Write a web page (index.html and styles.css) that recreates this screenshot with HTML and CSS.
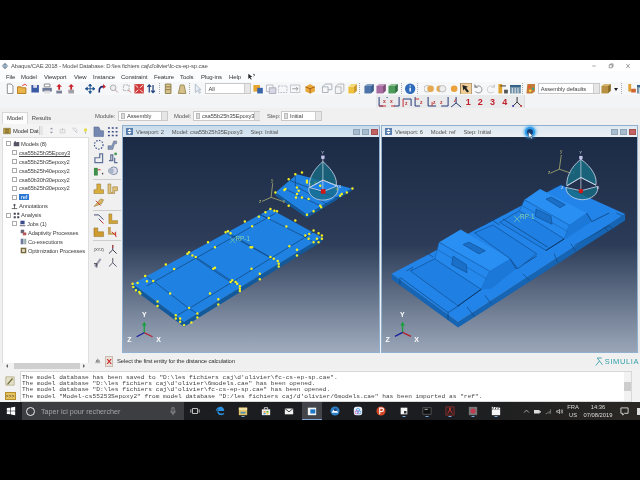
FILE: index.html
```html
<!DOCTYPE html>
<html lang="fr">
<head>
<meta charset="utf-8">
<title>Abaqus/CAE</title>
<link rel="stylesheet" href="styles.css">
</head>
<body>
<div class="letterbox top"></div>
<div class="app">
  <div class="titlebar">
    <svg class="ic title-ic" viewBox="0 0 12 12"><path d="M6 1 11 6 6 11 1 6Z" fill="#7a93a8"/><path d="M1 6h10" stroke="#e6eef2"/></svg>
    <span class="title-text">Abaqus/CAE 2018 - Model Database: D:\les fichiers caj\d'olivier\fc-cs-ep-sp.cae</span>
    <div class="win-btns">
      <svg class="wb" viewBox="0 0 10 10"><path d="M2 5h6" stroke="#777"/></svg>
      <svg class="wb" viewBox="0 0 10 10"><path d="M2 3h5v5H2ZM4 3V1.500h4.500V6H7" fill="none" stroke="#666"/></svg>
      <svg class="wb" viewBox="0 0 10 10"><path d="M2 1.500l6 7M8 1.500l-6 7" stroke="#666"/></svg>
    </div>
  </div>
  <div class="menubar">
    <span class="m m-file">File</span><span class="m m-model">Model</span><span class="m m-vp">Viewport</span><span class="m m-view">View</span><span class="m m-inst">Instance</span><span class="m m-con">Constraint</span><span class="m m-fea">Feature</span><span class="m m-too">Tools</span><span class="m m-plu">Plug-ins</span><span class="m m-hlp">Help</span>
    <svg class="ic help-arrow" viewBox="0 0 12 12"><path d="M2 1v8l2-2 2 3 1-1-2-3h3Z" fill="#222"/><path d="M9 2h2v2l-1 1" stroke="#222" fill="none"/></svg>
  </div>
  <div class="toolbar tb1">
    <svg class="ic" viewBox="0 0 12 12"><path d="M3 1h4l2 2v8H3Z" fill="#fff" stroke="#8a8a8a"/></svg>
    <svg class="ic" viewBox="0 0 12 12"><path d="M1 4h4l1 1h4v6H1Z" fill="#eab54a" stroke="#b47a1d"/><path d="M6 3l3-2 2 2" fill="none" stroke="#d33"/></svg>
    <svg class="ic" viewBox="0 0 12 12"><path d="M2 2h8v8H2Z" fill="#3b5aa6"/><path d="M4 2h4v3H4Z" fill="#dde"/></svg>
    <svg class="ic" viewBox="0 0 12 12"><path d="M3 1h6v3H3Z" fill="#fff" stroke="#888"/><path d="M1 5h10v4H1Z" fill="#6f7a9a"/><path d="M3 8h6v3H3Z" fill="#ddd"/></svg>
    <svg class="ic" viewBox="0 0 12 12"><path d="M6 1 9 4H7v3H5V4H3Z" fill="#c9242c"/><path d="M3 8h6v3H3Z" fill="#7c7f95"/></svg>
    <svg class="ic" viewBox="0 0 12 12"><path d="M6 1 9 4H7v3H5V4H3Z" fill="#c9242c"/><path d="M3 7h6v4H3Z" fill="#a2a0a8"/></svg>
    <svg class="ic g1" viewBox="0 0 12 12"><path d="M6 1v10M1 6h10M6 1 4.500 3h3ZM6 11 4.500 9h3ZM1 6l2-1.500v3ZM11 6 9 4.500v3Z" stroke="#20558f" fill="#20558f"/></svg>
    <svg class="ic" viewBox="0 0 12 12"><path d="M3 10C2 5 5 3 8 4" fill="none" stroke="#1c2f70" stroke-width="1.800"/><path d="M7 1l3 3-3 2Z" fill="#c9242c"/></svg>
    <svg class="ic" viewBox="0 0 12 12"><circle cx="5" cy="5" r="3" fill="#eee" stroke="#aaa"/><path d="M7 7l3 3" stroke="#b99"/></svg>
    <svg class="ic" viewBox="0 0 12 12"><path d="M2 2h6v6H2Z" fill="none" stroke="#aaa" stroke-dasharray="2 1"/><path d="M7 7l3 3" stroke="#c77"/></svg>
    <svg class="ic" viewBox="0 0 12 12"><path d="M1 1h10v10H1Z" fill="#cf3a3a"/><path d="M2 2l3 3M10 2 7 5M2 10l3-3M10 10 7 7" stroke="#fff"/></svg>
    <svg class="ic" viewBox="0 0 12 12"><path d="M4 10V2M2 4l2-2 2 2M8 2v8M6 8l2 2 2-2" fill="none" stroke="#1f3f7c" stroke-width="1.300"/></svg>
    <i class="sep"></i>
    <svg class="ic" viewBox="0 0 12 12"><path d="M3 1h6v10H3Z" fill="#d8c48c" stroke="#8d7c4a"/><path d="M3 4h6M3 7h6" stroke="#8d7c4a"/></svg>
    <svg class="ic g3" viewBox="0 0 12 12"><path d="M4 2h4l2 9H2Z" fill="#d6c18c" stroke="#9c8a55"/></svg>
    <i class="sep"></i>
    <svg class="ic" viewBox="0 0 12 12"><path d="M3 1v9l2.500-2 2 3 1-1-2-3H9Z" fill="#e8eef5" stroke="#9aa7b5" stroke-width=".7"/></svg>
    <span class="combo all"><span>All</span><b class="arr"></b></span>
    <svg class="ic g5" viewBox="0 0 12 12"><path d="M1 2h7v7H1Z" fill="#e8a52b"/><path d="M5 5h6v6H5Z" fill="#3a64a8"/></svg>
    <svg class="ic" viewBox="0 0 12 12"><path d="M1 2h7v7H1Z" fill="none" stroke="#b9b9c2"/><path d="M4 5h7v6H4Z" fill="#d5d8e4" stroke="#aab"/></svg>
    <svg class="ic" viewBox="0 0 12 12"><path d="M1 3h9v7H1Z" fill="none" stroke="#b5bcc8" stroke-dasharray="2 1"/></svg>
    <svg class="ic" viewBox="0 0 12 12"><path d="M1 2h10v8H1Z" fill="none" stroke="#bcc2cc"/><path d="M3 6h6M7 4l2 2-2 2" fill="none" stroke="#999"/></svg>
    <svg class="ic g6" viewBox="0 0 12 12"><path d="M6 1 11 4v5L6 11 1 9V4Z" fill="#e8a93a"/><path d="M1 4l5 2 5-2M6 6v5" stroke="#a65c1f" fill="none"/></svg>
    <svg class="ic g6b" viewBox="0 0 12 12"><path d="M1 4h6v6H1ZM4 1h7v6H7M1 4l3-3" fill="none" stroke="#a7aeba"/></svg>
    <svg class="ic" viewBox="0 0 12 12"><path d="M2 4h6v7H2ZM2 4l3-3h6v7l-3 3" fill="#f4f4f4" stroke="#b0b4bb"/></svg>
    <svg class="ic" viewBox="0 0 12 12"><path d="M2 4h6v7H2Z" fill="#eec23f"/><path d="M2 4l3-3h6L8 4Z" fill="#f4da78"/><path d="M8 4l3-3v7l-3 3Z" fill="#c99726"/></svg>
    <i class="sep"></i>
    <svg class="ic g8" viewBox="0 0 12 12"><path d="M1 3h7v8H1Z" fill="#4d74a8"/><path d="M1 3l3-2h7L8 3Z" fill="#7fa0c4"/><path d="M8 3l3-2v7l-3 3Z" fill="#365c8c"/></svg>
    <svg class="ic" viewBox="0 0 12 12"><path d="M1 3h7v8H1Z" fill="#a86ca2"/><path d="M1 3l3-2h7L8 3Z" fill="#c49ac0"/><path d="M8 3l3-2v7l-3 3Z" fill="#7d4c79"/></svg>
    <svg class="ic" viewBox="0 0 12 12"><path d="M1 3h7v8H1Z" fill="#4b9a5a"/><path d="M1 3l3-2h7L8 3Z" fill="#8dc08f"/><path d="M8 3l3-2v7l-3 3Z" fill="#2f7040"/></svg>
    <i class="sep"></i>
    <svg class="ic" viewBox="0 0 12 12"><circle cx="6" cy="6" r="5.500" fill="#2f6cbc"/><path d="M6 5v4M6 2.500v1" stroke="#fff" stroke-width="1.500"/></svg>
    <i class="sep"></i>
    <svg class="ic g10" viewBox="0 0 12 12"><circle cx="4" cy="6" r="3.500" fill="none" stroke="#bbb"/><circle cx="7.500" cy="6" r="3.500" fill="#e3a850"/></svg>
    <svg class="ic" viewBox="0 0 12 12"><circle cx="4.500" cy="6" r="3.500" fill="#e3a850"/><circle cx="7.500" cy="6" r="3.500" fill="#eee" stroke="#bbb"/></svg>
    <svg class="ic" viewBox="0 0 12 12"><circle cx="6" cy="6" r="3.500" fill="#eba23c"/></svg>
    <svg class="ic" viewBox="0 0 12 12"><path d="M0 0h12v12H0Z" fill="#f0cf9a" stroke="#98814e"/><path d="M2 2l6 2-2 1 3 4-2 1-3-4-1 2Z" fill="#222"/></svg>
    <svg class="ic" viewBox="0 0 12 12"><path d="M4 4C6 2 10 3 10 7S5 11 3 9" fill="none" stroke="#8a8a8a"/><path d="M2 1v4h4Z" fill="#8a8a8a"/></svg>
    <svg class="ic" viewBox="0 0 12 12"><path d="M8 4C6 2 2 3 2 7s5 4 7 2" fill="none" stroke="#ccc"/><path d="M10 1v4H6Z" fill="#ccc"/></svg>
    <svg class="ic" viewBox="0 0 12 12"><path d="M1 1h4v10H1Z" fill="#dea32e"/><path d="M7 7h4v4H7Z" fill="#555"/><path d="M3 3h6" stroke="#333"/></svg>
    <svg class="ic" viewBox="0 0 12 12"><path d="M0 2h12v9H0Z" fill="#6f8fa6"/><path d="M0 2h12v2H0Z" fill="#2f5f88"/><path d="M3 5v6M6 5v6M9 5v6" stroke="#e8eef2"/></svg>
    <i class="sep"></i>
    <svg class="ic" viewBox="0 0 12 12"><path d="M2 1h8v8l-3 2H1Z" fill="#c27b39"/><circle cx="4" cy="4" r="1.300" fill="#e53"/><circle cx="8" cy="6" r="1.300" fill="#3a8"/><circle cx="5" cy="8" r="1.300" fill="#fd4"/></svg>
    <span class="combo defaults"><span>Assembly defaults</span><b class="arr"></b></span>
    <svg class="ic" viewBox="0 0 12 12"><path d="M1 3h7v8H1Z" fill="#b89242"/><path d="M1 3l3-2h7L8 3Z" fill="#d3b56f"/><path d="M8 3l3-2v7l-3 3Z" fill="#8c6d28"/></svg>
    <b class="drop"></b>
    <i class="sep"></i>
    <svg class="ic g14" viewBox="0 0 12 12"><path d="M3 1h3v8H3Z" fill="#dca032"/><path d="M6 6h5v4H6Z" fill="#cc6633"/></svg>
    <svg class="ic g15" viewBox="0 0 12 12"><path d="M0 2h12v9H0Z" fill="#6f8fa6"/><path d="M0 2h12v2H0Z" fill="#2f5f88"/><path d="M3 5v6M6 5v6M9 5v6" stroke="#e8eef2"/></svg>
  </div>
  <div class="toolbar tb2">
    <div class="views">
      <svg class="ic" viewBox="0 0 12 12"><path d="M2 1v9h4M10 1v1" fill="none" stroke="#273a79"/><path d="M2 10h7" stroke="#c33"/><text x="6" y="7" class="axis">x</text></svg>
      <svg class="ic" viewBox="0 0 12 12"><path d="M10 1v9H5" fill="none" stroke="#273a79"/><path d="M2 10h4" stroke="#c33"/><text x="1" y="7" class="axis">x</text></svg>
      <svg class="ic" viewBox="0 0 12 12"><path d="M2 3h8v7" fill="none" stroke="#273a79"/><path d="M2 3v8" stroke="#c33"/><text x="4" y="9" class="axis">z</text></svg>
      <svg class="ic" viewBox="0 0 12 12"><path d="M2 1v9h5" fill="none" stroke="#273a79"/><path d="M2 3h4" stroke="#c33"/><text x="7" y="8" class="axis">z</text></svg>
      <svg class="ic" viewBox="0 0 12 12"><path d="M2 1v9h8" fill="none" stroke="#273a79"/><path d="M6 10V6" stroke="#c33"/><text x="7" y="8" class="axis">z</text></svg>
      <svg class="ic" viewBox="0 0 12 12"><path d="M10 1v9H3" fill="none" stroke="#273a79"/><text x="2" y="8" class="axis">z</text></svg>
      <svg class="ic" viewBox="0 0 12 12"><path d="M6 7V1M6 7 1 11M6 7l5 4" stroke="#273a79" fill="none"/><path d="M6 3 4 6" stroke="#c33"/></svg>
      <span class="num">1</span><span class="num">2</span><span class="num">3</span><span class="num">4</span>
      <svg class="ic" viewBox="0 0 12 12"><path d="M6 6V1M6 6 2 10M6 6l4 4" stroke="#333" fill="none"/><circle cx="10" cy="10" r="1" fill="#c33"/><circle cx="2" cy="10" r="1" fill="#33a"/></svg>
    </div>
  </div>
  <div class="mainrow">
    <aside class="sidebar">
      <div class="tabs"><span class="tab on">Model</span><span class="tab">Results</span></div>
      <div class="sidetools">
        <svg class="ic" viewBox="0 0 12 12"><path d="M1 2h10v8H1Z" fill="#c9a848" stroke="#7a6727"/><path d="M3 4h6M3 6h6M3 8h6" stroke="#5a4f25"/></svg>
        <span class="sidecombo"><span>Model Dat</span><b class="arr"></b></span>
        <svg class="ic sm" viewBox="0 0 12 12"><path d="M6 1 9 4H3ZM6 11 3 8h6Z" fill="#99a"/></svg>
        <svg class="ic sm" viewBox="0 0 12 12"><path d="M2 4h8v6H2Z" fill="none" stroke="#bbb"/><path d="M6 8V2" stroke="#bbb"/></svg>
        <svg class="ic sm" viewBox="0 0 12 12"><path d="M2 2h5l3 3v5" fill="none" stroke="#bbb"/><path d="M4 4l5 5" stroke="#aac"/></svg>
        <svg class="ic sm" viewBox="0 0 12 12"><circle cx="6" cy="5" r="3" fill="#e3dc4a"/><path d="M5 9h2v2H5Z" fill="#999"/></svg>
      </div>
      <div class="tree">
        <div class="row l0"><i class="exp"></i><svg class="ti" viewBox="0 0 10 10"><path d="M1 9V4l2-3 2 3v5ZM5 9V3h4v6Z" fill="#556"/></svg><span>Models (8)</span></div>
        <div class="row l1"><i class="exp"></i><span class="cur">csa55b25h35Epoxy3</span></div>
        <div class="row l1"><i class="exp"></i><span>csa55b25h35epoxy2</span></div>
        <div class="row l1"><i class="exp"></i><span>csa55b25h40epoxy2</span></div>
        <div class="row l1"><i class="exp"></i><span>csa60b30h30epoxy2</span></div>
        <div class="row l1"><i class="exp"></i><span>csa65b25h30epoxy2</span></div>
        <div class="row l1"><i class="exp"></i><span class="sel">ref</span></div>
        <div class="row l2"><svg class="ti" viewBox="0 0 10 10"><path d="M1 8h8M5 8V3" stroke="#333"/><circle cx="5" cy="3" r="1.500" fill="#445"/></svg><span>Annotations</span></div>
        <div class="row l0"><i class="exp"></i><svg class="ti" viewBox="0 0 10 10"><path d="M1 1h3v3H1ZM1 6h3v3H1ZM6 1h3v3H6ZM6 6h3v3H6Z" fill="#445"/></svg><span>Analysis</span></div>
        <div class="row l1"><i class="exp"></i><svg class="ti" viewBox="0 0 10 10"><path d="M2 1h6v5H2Z" fill="#3d4b8c"/><path d="M1 7h8v2H1Z" fill="#889"/></svg><span>Jobs (1)</span></div>
        <div class="row l3"><svg class="ti" viewBox="0 0 10 10"><path d="M1 1h5v5H1Z" fill="#667"/><path d="M4 5h5v4H4Z" fill="#b55"/></svg><span>Adaptivity Processes</span></div>
        <div class="row l3"><svg class="ti" viewBox="0 0 10 10"><path d="M1 1h4v8H1Z" fill="#6c7a9a"/><path d="M6 1h3v8H6Z" fill="#9aa"/></svg><span>Co-executions</span></div>
        <div class="row l3"><svg class="ti" viewBox="0 0 10 10"><path d="M1 1h8v8H1Z" fill="#7a6a3a"/><path d="M3 3h4v4H3Z" fill="#ddc"/></svg><span>Optimization Processes</span></div>
      </div>
      <div class="hscroll"><b class="al"></b><i></i><b class="ar"></b></div>
    </aside>
    <div class="workarea">
      <div class="modulebar">
        <span class="lab l-mod">Module:</span><span class="combo c-mod"><u></u><span>Assembly</span><b class="arr"></b></span>
        <span class="lab l-mdl">Model:</span><span class="combo c-mdl"><u></u><span>csa55b25h35Epoxy3</span><b class="arr"></b></span>
        <span class="lab l-stp">Step:</span><span class="combo c-stp"><u></u><span>Initial</span><b class="arr"></b></span>
      </div>
      <div class="canvasrow">
        <div class="palette">
          <svg class="ic" viewBox="0 0 12 12"><path d="M1 1h5l2 4h3v6H1Z" fill="#7487b0" stroke="#485a85" stroke-width=".5"/></svg>
          <svg class="ic" viewBox="0 0 12 12"><path d="M1 2h2M5 2h2M9 2h2M1 6h2M5 6h2M9 6h2M1 10h2M5 10h2M9 10h2" stroke="#3d4d86" stroke-width="1.500"/></svg>
          <svg class="ic" viewBox="0 0 12 12"><circle cx="6" cy="6" r="4.500" fill="none" stroke="#354a86" stroke-width="1.200" stroke-dasharray="1.500 1.500"/></svg>
          <svg class="ic" viewBox="0 0 12 12"><path d="M1 11V7h4l2-5h3v3H8l-2 6Z" fill="#8296bb" stroke="#556" stroke-width=".4"/></svg>
          <svg class="ic" viewBox="0 0 12 12"><path d="M2 6h5V2h3v9H2Z" fill="none" stroke="#5f7299" stroke-width="1.300"/></svg>
          <svg class="ic" viewBox="0 0 12 12"><path d="M4 3h2v6H2V9H4ZM8 6v5h3" fill="none" stroke="#5e7096" stroke-width="1.300"/><circle cx="9" cy="2" r="1.500" fill="#4a9a55"/></svg>
          <svg class="ic" viewBox="0 0 12 12"><path d="M1 3h4v8H1Z" fill="#3d8f4a"/><path d="M5 5h3" stroke="#c33"/><circle cx="10" cy="9" r=".8" fill="#444"/></svg>
          <svg class="ic" viewBox="0 0 12 12"><circle cx="7" cy="6" r="4" fill="#dde" stroke="#7a8aa5"/><circle cx="4" cy="6" r="3" fill="#a8b4c8"/></svg>
          <i class="psep"></i>
          <svg class="ic" viewBox="0 0 12 12"><path d="M4 1h4v6h3v4H1V7h3Z" fill="#d9ae3e" stroke="#8a6a20" stroke-width=".5"/></svg>
          <svg class="ic" viewBox="0 0 12 12"><path d="M1 1h3v9h2V4h5v4H8v3H1Z" fill="#e0c27a" stroke="#8a6a20" stroke-width=".5"/></svg>
          <svg class="ic" viewBox="0 0 12 12"><path d="M1 11 8 3l3 1-2 4Z" fill="#d5b468" stroke="#8a6a20" stroke-width=".5"/><path d="M3 5l5 5" stroke="#c33"/></svg>
          <i class="ic"></i>
          <i class="psep"></i>
          <svg class="ic" viewBox="0 0 12 12"><path d="M1 2h5l5 5M6 6l4 4" fill="none" stroke="#444a70"/><path d="M8 8l3 3" stroke="#c33"/></svg>
          <svg class="ic" viewBox="0 0 12 12"><path d="M2 1h3v7h6v3H2Z" fill="#d3a535" stroke="#8a6a20" stroke-width=".5"/></svg>
          <svg class="ic" viewBox="0 0 12 12"><path d="M1 2h4v4h6v5H1Z" fill="#cf9a2e" stroke="#8a6a20" stroke-width=".5"/></svg>
          <svg class="ic" viewBox="0 0 12 12"><path d="M1 1h3v6h5v2H1Z" fill="#c8a25a"/><path d="M5 6l5 5M9 6v5" stroke="#c33"/></svg>
          <i class="psep"></i>
          <span class="ic coord">(XYZ)</span>
          <svg class="ic" viewBox="0 0 12 12"><path d="M6 6V1M6 6 2 10M6 6l4 4" stroke="#334" fill="none"/><path d="M6 1v3" stroke="#c33"/></svg>
          <svg class="ic" viewBox="0 0 12 12"><path d="M2 10 8 2" stroke="#99a" stroke-width="2"/><path d="M1 7h3v4" fill="none" stroke="#334"/></svg>
          <svg class="ic" viewBox="0 0 12 12"><path d="M6 6V1M6 6 2 10M6 6l4 4" stroke="#556" fill="none"/></svg>
        </div>
        <section class="vp vp-a">
          <header class="vp-head"><svg class="vp-ic" viewBox="0 0 9 9"><path d="M0 0h9v9H0Z" fill="#5b7fae"/><path d="M4.500 1 2 4h5ZM4.500 8 2 5h5Z" fill="#fff"/></svg><span>Viewport: 2</span><span>Model: csa55b25h35Epoxy3</span><span>Step: Initial</span><div class="vp-btns"><i></i><i></i><i class="x"></i></div></header>
          <svg class="scene" viewBox="6 -12 771 648" preserveAspectRatio="none">
            <defs>
              <linearGradient id="bg-a" x1="0" y1="0" x2="0" y2="1"><stop offset="0" stop-color="#1b2a45"/><stop offset=".5" stop-color="#2e3e5a"/><stop offset="1" stop-color="#a0acbe"/></linearGradient>
            </defs>
            <rect x="6" y="-12" width="771" height="648" fill="url(#bg-a)"/>
            <path d="M35 430 190 545 605 290V303L190 560 35 445Z" fill="#125a9c"/>
            <path d="M35 430 450 205 605 290 190 545Z" fill="#1f82e2"/>
            <path d="M100 424 440 232 555 290 205 505ZM75 408 100 424 78 437M170 525 205 505 230 520M225 350 345 430M205 340 330 425M332 282 462 358M318 278 450 352M440 232 415 220 440 232 465 218M555 290 585 270 555 290 580 305" fill="none" stroke="#103f72" stroke-width="2"/>
            <path d="M465 155 530 100 695 143 560 222Z" fill="#1f82e2"/>
            <path d="M465 155 560 222V232L465 165ZM560 222 695 143V150L560 232Z" fill="#125a9c"/>
            <path d="M505 118 660 175M495 145 610 200M525 100 525 135 620 190" fill="none" stroke="#103f72" stroke-width="2"/>
            <path d="M35 430h0M37 440h0M45 450h0M55 455h0M58 460h0M73 407h0M50 428h0M78 423h0M97 422h0M110 484h0M110 497h0M148 460h0M135 372h0M160 386h0M165 525h0M165 535h0M178 535h0M178 545h0M190 555h0M205 503h0M212 547h0M230 520h0M230 532h0M293 477h0M293 493h0M268 460h0M262 305h0M200 340h0M205 335h0M215 345h0M225 350h0M283 320h0M278 385h0M283 382h0M330 425h0M335 420h0M345 425h0M350 430h0M358 438h0M358 445h0M358 452h0M418 400h0M418 417h0M393 385h0M395 320h0M390 320h0M315 275h0M322 272h0M330 278h0M373 243h0M395 257h0M435 215h0M450 205h0M462 210h0M470 212h0M415 228h0M445 232h0M525 240h0M498 258h0M507 317h0M530 328h0M530 345h0M450 350h0M460 355h0M472 362h0M475 370h0M475 378h0M555 285h0M567 280h0M580 270h0M595 278h0M565 295h0M590 295h0M605 285h0M605 295h0M580 305h0M595 305h0M465 155h0M495 145h0M492 148h0M505 115h0M525 100h0M545 95h0M505 195h0M560 222h0M580 212h0M600 195h0M603 200h0M680 155h0M697 143h0M665 160h0M660 165h0M560 125h0M585 125h0M600 135h0M530 140h0M535 150h0M530 160h0M527 170h0M545 170h0M565 175h0M560 120h0M570 130h0M650 145h0" fill="none" stroke="#f2f020" stroke-width="7.500" stroke-linecap="round"/>
            <path d="M452 170 457 127M452 170 425 182M452 170 490 183" stroke="#c4c97a" stroke-width="2" fill="none"/>
            <text x="452" y="124" class="ktx">y</text><text x="416" y="186" class="ktx">z</text><text x="488" y="188" class="ktx">x</text>
            <path d="M608 62C570 95 565 125 568 140L608 118 648 135C652 115 640 90 608 62Z" fill="#176b82" fill-opacity=".8" stroke="#c8d4ea" stroke-width="2.500"/>
            <path d="M566 140C560 165 590 180 610 178 635 178 660 160 652 135L610 152Z" fill="#176b82" fill-opacity=".7" stroke="#c8d4ea" stroke-width="2.500"/>
            <path d="M608 50V150M568 140 608 118 652 135" stroke="#d8e0f0" stroke-width="2" fill="none"/>
            <rect x="602" y="145" width="14" height="14" fill="#d01818"/>
            <rect x="603" y="44" width="10" height="10" fill="#c6c4ee"/>
            <text x="603" y="38" class="wtx">Y</text><text x="655" y="142" class="ltx">X</text>
            <path d="M328 290 345 308M345 290 328 308" stroke="#79c9a0" stroke-width="2"/>
            <text x="345" y="300" class="rp">RP-1</text>
            <g class="triad"><path d="M70 578V552" stroke="#18a03a" stroke-width="4"/><path d="M70 545 63 556H77Z" fill="#18a03a"/><path d="M70 578 95 590" stroke="#b3202a" stroke-width="4"/><path d="M70 578 47 590" stroke="#181f99" stroke-width="4"/><text x="70" y="532" class="tx">Y</text><text x="25" y="607" class="tx">Z</text><text x="113" y="607" class="tx">X</text></g>
          </svg>
        </section>
        <section class="vp vp-b">
          <header class="vp-head"><svg class="vp-ic" viewBox="0 0 9 9"><path d="M0 0h9v9H0Z" fill="#5b7fae"/><path d="M4.500 1 2 4h5ZM4.500 8 2 5h5Z" fill="#fff"/></svg><span>Viewport: 6</span><span>Model: ref</span><span>Step: Initial</span><div class="vp-btns"><i></i><i></i><i class="x"></i></div>
            <div class="pointer"><b class="glow"></b><svg viewBox="0 0 10 14" class="arrow"><path d="M1 1v10l2.500-2.500 2 4 1.800-1-2-3.800H8Z" fill="#fff" stroke="#223" stroke-width=".6"/></svg></div>
          </header>
          <svg class="scene" viewBox="6 33 768 648" preserveAspectRatio="none">
            <defs>
              <linearGradient id="bg-b" x1="0" y1="0" x2="0" y2="1"><stop offset="0" stop-color="#1b2a45"/><stop offset=".5" stop-color="#2c3c58"/><stop offset="1" stop-color="#9aa6b8"/></linearGradient>
            </defs>
            <rect x="6" y="33" width="768" height="648" fill="url(#bg-b)"/>
            <path d="M35 445 235 590 738 265V285L235 607 35 462Z" fill="#1664b4"/>
            <path d="M35 445 545 178 738 265 235 590Z" fill="#2284e8"/>
            <path d="M62 457 205 562M95 432 240 540M60 457V478M205 562V585M100 425 80 437M160 395 135 378M240 540 205 562M262 545 285 575M315 510 335 535M430 445 450 465M525 385 535 412M575 355 590 378M585 360 690 300 712 320M675 305 690 320M712 262 730 270M310 300 365 270M335 282 360 298M470 235 430 258" fill="none" stroke="#0f4378" stroke-width="2"/>
            <path d="M92 437 165 400 305 492 235 542Z" fill="#1f7fe2" stroke="#114e90" stroke-width="2"/>
            <path d="M235 542 305 492" stroke="#0b3564" stroke-width="3"/>
            <path d="M165 400 178 350 330 437 305 492Z" fill="#2488ec" stroke="#1359a3" stroke-width="1.500"/>
            <path d="M178 350 243 312 392 400 330 437Z" fill="#2a8ff2"/>
            <path d="M330 437 392 400 410 430 335 490 305 492Z" fill="#1c78d8"/>
            <path d="M392 400 410 430 472 392" fill="none" stroke="#0b3564" stroke-width="2"/>
            <path d="M178 350 330 437M172 372 320 460" stroke="#145aa4" stroke-width="1.500" fill="none"/>
            <path d="M220 392 260 418 262 442 216 418Z" fill="#1a70c8" stroke="#114e90" stroke-width="2"/>
            <path d="M250 357 268 350 317 376 298 385Z" fill="#1a70c8" stroke="#114e90" stroke-width="2"/>
            <path d="M285 322 340 298 472 385 415 430 392 400Z" fill="#1f7fe2" stroke="#114e90" stroke-width="2"/>
            <path d="M360 290 420 255 555 340 500 375Z" fill="#1f7fe2" stroke="#114e90" stroke-width="2"/>
            <path d="M500 375 555 340" stroke="#0b3564" stroke-width="3"/>
            <path d="M420 255 435 222 570 298 555 340Z" fill="#2488ec" stroke="#1359a3" stroke-width="1.500"/>
            <path d="M435 222 482 190 622 262 570 298Z" fill="#2a8ff2"/>
            <path d="M570 298 622 262 638 288 560 340 555 340Z" fill="#1c78d8"/>
            <path d="M622 262 638 288 690 262" fill="none" stroke="#0b3564" stroke-width="2"/>
            <path d="M435 222 570 298M428 240 565 318" stroke="#145aa4" stroke-width="1.500" fill="none"/>
            <path d="M470 250 515 272 518 296 468 272Z" fill="#1a70c8" stroke="#114e90" stroke-width="2"/>
            <path d="M500 220 516 214 558 237 542 246Z" fill="#1a70c8" stroke="#114e90" stroke-width="2"/>
            <path d="M520 187 550 175 565 183M370 280 505 365" stroke="#0f4378" stroke-width="2" fill="none"/>
            <path d="M403 270 422 290M422 270 403 290" stroke="#7fd0a5" stroke-width="2"/>
            <text x="422" y="280" class="rp">RP-1</text>
            <path d="M540 130 546 87M540 130 513 142M540 130 578 143" stroke="#c4c97a" stroke-width="2" fill="none"/>
            <text x="542" y="82" class="ktx">y</text><text x="506" y="146" class="ktx">z</text><text x="580" y="146" class="ktx">x</text>
            <path d="M605 100C572 125 560 160 563 180L605 155 650 178C655 155 640 125 605 100Z" fill="#176b82" fill-opacity=".85" stroke="#c8d4ea" stroke-width="2.500"/>
            <path d="M560 185C560 210 590 222 610 222 635 222 660 205 655 182L605 195Z" fill="#176b82" fill-opacity=".8" stroke="#c8d4ea" stroke-width="2.500"/>
            <path d="M605 95V195M563 180 605 155 650 178" stroke="#d8e0f0" stroke-width="2" fill="none"/>
            <circle cx="605" cy="196" r="7" fill="#d01818"/>
            <rect x="600" y="90" width="10" height="10" fill="#c6c4ee"/>
            <text x="600" y="83" class="wtx">Y</text><text x="653" y="190" class="ltx">X</text><text x="545" y="190" class="ltx">Z</text>
            <g class="triad"><path d="M68 622V598" stroke="#18a03a" stroke-width="4"/><path d="M68 590 61 601H75Z" fill="#18a03a"/><path d="M68 622 93 634" stroke="#b3202a" stroke-width="4"/><path d="M68 622 45 634" stroke="#181f99" stroke-width="4"/><text x="67" y="577" class="tx">Y</text><text x="23" y="650" class="tx">Z</text><text x="110" y="650" class="tx">X</text></g>
          </svg>
        </section>
        <div class="edge"></div>
      </div>
      <div class="promptrow">
        <svg class="ic" viewBox="0 0 12 12"><path d="M1 9 9 9 5 2Z" fill="#bbb"/><path d="M8 6H3M5 4 3 6l2 2" fill="none" stroke="#777"/></svg>
        <span class="cancel">X</span>
        <span class="prompt">Select the first entity for the distance calculation</span>
        <span class="logo"><svg class="logo-ic" viewBox="0 0 12 14"><path d="M1 13 6 7 3 3h6M6 7l4 5" fill="none" stroke="#2b9aa2" stroke-width="1.100"/></svg><span>SIMULIA</span></span>
      </div>
    </div>
  </div>
  <div class="msgrow">
    <div class="msgtools">
      <svg class="ic" viewBox="0 0 12 12"><path d="M1 1h10v10H1Z" fill="#e4e0c8" stroke="#b5ae8c"/><path d="M3 10 9 3" stroke="#6d6a3a" stroke-width="1.500"/></svg>
      <span class="prompt-ic">&gt;&gt;&gt;</span>
    </div>
    <div class="log">
      <p>The model database has been saved to "D:\les fichiers caj\d'olivier\fc-cs-ep-sp.cae".</p>
      <p>The model database "D:\les fichiers caj\d'olivier\6models.cae" has been opened.</p>
      <p>The model database "D:\les fichiers caj\d'olivier\fc-cs-ep-sp.cae" has been opened.</p>
      <p>The model "Model-cs55253Sepoxy2" from model database "D:/les fichiers caj/d'olivier/6models.cae" has been imported as "ref".</p>
      <div class="vscroll"><b></b><i></i><b></b></div>
    </div>
  </div>
</div>
<div class="taskbar">
  <svg class="tk start" viewBox="0 0 12 12"><path d="M1 2.500 5.300 2V5.700H1ZM6 1.900 11 1V5.700H6ZM1 6.300H5.300V10L1 9.500ZM6 6.300H11V11L6 10.100Z" fill="#fff"/></svg>
  <div class="search"><b class="ring"></b><span>Taper ici pour rechercher</span><svg class="mic" viewBox="0 0 8 12"><path d="M2.500 1h3v6h-3ZM1 5c0 5 6 5 6 0M4 9v2" fill="none" stroke="#999"/></svg></div>
  <svg class="tk t-view" viewBox="0 0 12 12"><path d="M3 3h6v6H3ZM1 4v4M11 4v4" fill="none" stroke="#ddd"/></svg>
  <svg class="tk t-edge" viewBox="0 0 12 12"><path d="M1 7C1 2 5 1 7 1c3 0 4 3 4 5H4c0 3 4 4 7 2v2c-3 2-9 1-8-4 0-1 1-2 2-3-2 1-3 2-4 4Z" fill="#2a8fdd"/></svg>
  <svg class="tk on" viewBox="0 0 12 12"><path d="M1 2h10v9H1Z" fill="#e4c267"/><path d="M1 2h10v3H1Z" fill="#f2dfa4"/><path d="M3 8h6" stroke="#4a8fbd" stroke-width="2"/></svg>
  <svg class="tk" viewBox="0 0 12 12"><path d="M1 4h10v7H1Z" fill="#eee"/><path d="M4 4V2h4v2" fill="none" stroke="#eee"/><path d="M3 6h2.500v2H3Z" fill="#e94"/><path d="M6.500 6H9v2H6.500Z" fill="#6b3"/><path d="M3 8.500h2.500V10H3Z" fill="#39d"/><path d="M6.500 8.500H9V10H6.500Z" fill="#fc3"/></svg>
  <svg class="tk" viewBox="0 0 12 12"><path d="M1 3h10v7H1Z" fill="#f4f4f4"/><path d="M1 3l5 4 5-4" fill="none" stroke="#222"/></svg>
  <span class="tk app-on"><svg viewBox="0 0 12 12"><path d="M1 2h10v9H1Z" fill="#f2f6fa"/><path d="M4 4h6v5H4Z" fill="#1d78c8"/></svg></span>
  <svg class="tk" viewBox="0 0 12 12"><circle cx="6" cy="6" r="5.500" fill="#2f7fc6"/><path d="M2 8c2-4 4-5 8 0" fill="#fff"/><path d="M5 3h3v3H5Z" fill="#1c3f7a"/></svg>
  <svg class="tk" viewBox="0 0 12 12"><rect x="1" y="1" width="10" height="10" rx="3" fill="#e8eef8"/><circle cx="6" cy="5" r="2" fill="none" stroke="#3aa2e0"/><circle cx="4.500" cy="7.500" r="2" fill="none" stroke="#d060c0"/><circle cx="7.500" cy="7.500" r="2" fill="none" stroke="#60a0e0"/></svg>
  <svg class="tk" viewBox="0 0 12 12"><circle cx="6" cy="6" r="5.500" fill="#d24726"/><path d="M4.500 10V2.500H7a2 2 0 0 1 0 4H4.500" fill="none" stroke="#fff" stroke-width="1.300"/></svg>
  <svg class="tk on" viewBox="0 0 12 12"><path d="M2 2h8v8H2Z" fill="#f4f4f4"/><path d="M6 6h3v3H6Z" fill="#333"/></svg>
  <svg class="tk on" viewBox="0 0 12 12"><path d="M1 2h10v8H1Z" fill="#111" stroke="#888" stroke-width=".6"/><path d="M3 4h4" stroke="#ccc"/></svg>
  <svg class="tk on" viewBox="0 0 12 12"><path d="M1 1h10v10H1Z" fill="#2a2020" stroke="#a33" stroke-width=".8"/><path d="M3 9C5 7 6 4 6 2c0 2 1 5 3 7" fill="none" stroke="#e33"/></svg>
  <svg class="tk on" viewBox="0 0 12 12"><path d="M1 1h10v10H1Z" fill="#777"/><circle cx="6" cy="6" r="3" fill="#c23a4f"/></svg>
  <svg class="tk on" viewBox="0 0 12 12"><path d="M1 4h10v7H1Z" fill="#f6f6f6"/><path d="M1 1l10 1v2H1Z" fill="#fff"/><path d="M3 1 2 4M6 1.500 5 4M9 2 8 4" stroke="#222"/></svg>
  <div class="tray">
    <svg class="tr" viewBox="0 0 10 10"><path d="M1.500 6.500 5 3l3.500 3.500" fill="none" stroke="#ddd"/></svg>
    <svg class="tr" viewBox="0 0 10 10"><path d="M0 3h8v5H0ZM8 4.500h2v2H8Z" fill="#ddd"/></svg>
    <svg class="tr" viewBox="0 0 10 10"><path d="M1 8h2M4 6v2M6 4v4M8 2v6" stroke="#999"/></svg>
    <svg class="tr" viewBox="0 0 10 10"><path d="M1 4h2l2-2v6L3 6H1ZM7 3c1 1 1 3 0 4M8.500 2c1.500 2 1.500 4 0 6" fill="none" stroke="#ddd"/></svg>
    <div class="lang"><span>FRA</span><span>US</span></div>
    <div class="clock"><span>14:36</span><span>07/08/2019</span></div>
    <svg class="tr note" viewBox="0 0 10 10"><path d="M1 1h8v6H5L3 9V7H1Z" fill="none" stroke="#ddd"/></svg>
    <i class="desk"></i>
  </div>
</div>
<div class="letterbox bottom"></div>
</body>
</html>
```
FILE: styles.css
```css
* { box-sizing: border-box; }
html, body { margin: 0; padding: 0; width: 640px; height: 480px; overflow: hidden; background: #000; }
body { display: flex; flex-direction: column; font-family: "Liberation Sans", Arial, sans-serif; color: #2a2a2a; }
.letterbox { background: #000; flex: none; }
.letterbox.top { height: 60px; }
.letterbox.bottom { height: 60px; }
.app { height: 342px; flex: none; display: flex; flex-direction: column; background: #f0f0f0; filter: blur(.4px); }
.ic { width: 12px; height: 12px; flex: none; display: block; }
.sep { width: 3px; height: 11px; flex: none; border-left: 1px dotted #aaa; margin-left: 1px; }

.titlebar { height: 11px; background: #fff; display: flex; align-items: center; padding-left: 1px; font-size: 6px; letter-spacing: -.19px; color: #555; }
.title-ic { width: 8px; height: 8px; margin-right: 2px; }
.win-btns { margin-left: auto; display: flex; gap: 11px; padding-right: 9px; }
.wb { width: 6px; height: 6px; display: block; }

.menubar { height: 11px; background: #fbfcfd; display: flex; align-items: center; font-size: 6px; letter-spacing: -.1px; color: #333; padding-left: 6px; }
.m { flex: none; }
.m-file { width: 15px; } .m-model { width: 23px; } .m-vp { width: 30px; } .m-view { width: 19px; }
.m-inst { width: 28px; } .m-con { width: 33px; } .m-fea { width: 26px; } .m-too { width: 21px; } .m-plu { width: 28px; } .m-hlp { width: 18px; }
.help-arrow { width: 8px; height: 8px; }

.toolbar { display: flex; align-items: center; flex: none; }
.tb1 { height: 13px; background: #f6f7f8; padding-left: 4px; }
.tb1 .ic { width: 12.300px; height: 11.500px; padding: 0 .5px; }
.tb1 .g1 { margin-left: 6px; }
.tb1 .g3 { margin-left: 2px; }
.tb1 .g5 { margin-left: 1px; }
.tb1 .g6 { margin-left: 2px; }
.tb1 .g6b { margin-left: 5px; }
.tb1 .g8 { margin-left: 1px; }
.tb1 .g10 { margin-left: 3px; }
.tb1 .g14 { margin-left: 1px; }
.tb1 .g15 { margin-left: -1px; }
.combo { height: 10px; background: #fff; border: 1px solid #c9c9c9; font-size: 5.800px; letter-spacing: -.1px; color: #444; display: flex; align-items: center; padding-left: 2px; flex: none; position: relative; white-space: nowrap; }
.arr { margin-left: auto; width: 6px; height: 100%; background: #e6e6e6; border-left: 1px solid #ccc; flex: none; }
.combo.all { width: 46px; height: 11px; margin-left: 1px; }
.combo.defaults { width: 62px; height: 11px; }
.drop { width: 0; height: 0; border: 2px solid transparent; border-top: 3px solid #222; margin: 3px 2px 0 2px; flex: none; }

.tb2 { height: 13px; background: #f3f4f6; justify-content: flex-end; padding-right: 115px; }
.views { display: flex; align-items: center; background: #e9eaec; padding: 0 1px; height: 13px; border-right: 1px solid #ddd; }
.views .ic { width: 12.200px; height: 12px; }
.axis { font: bold 5px "Liberation Sans", sans-serif; fill: #b33; }
.num { width: 12.200px; text-align: center; font-size: 9px; font-weight: bold; color: #c0202a; flex: none; }

.mainrow { display: flex; height: 261px; flex: none; background: #f0f0f0; }
.sidebar { width: 90px; flex: none; display: flex; flex-direction: column; padding: 3px 0 0 2px; }
.tabs { display: flex; height: 13px; font-size: 5.800px; align-items: flex-end; }
.tab { padding: 0 4px 1px; color: #444; height: 11px; display: flex; align-items: center; }
.tab.on { background: #fcfcfc; border: 1px solid #d8d8d8; border-bottom: 0; color: #333; height: 12px; }
.sidetools { height: 13px; display: flex; align-items: center; gap: 3px; background: #f4f4f4; padding-left: 1px; }
.sidetools .ic { width: 8px; height: 8px; }
.sidetools .ic.sm { width: 7px; height: 7px; margin-left: 1.500px; }
.sidecombo { width: 31px; height: 9px; display: flex; align-items: center; font-size: 5.800px; letter-spacing: -.1px; color: #333; margin-left: -2px; padding-left: 1px; white-space: nowrap; overflow: hidden; flex: none; }
.sidecombo .arr { width: 5px; }
.tree { height: 226px; background: #fff; border: 1px solid #dedede; border-bottom: 0; width: 87px; padding-top: 1.500px; font-size: 5.800px; letter-spacing: -.18px; color: #444; }
.row { height: 8.900px; display: flex; align-items: center; white-space: nowrap; gap: 1px; }
.l0 { padding-left: 3px; } .l1 { padding-left: 9px; } .l2 { padding-left: 8px; } .l3 { padding-left: 17px; }
.exp { width: 5px; height: 5px; border: 1px solid #aaa; background: #fff; flex: none; margin-right: 1px; }
.ti { width: 7px; height: 7px; flex: none; }
.cur { text-decoration: underline; text-decoration-thickness: 1px; }
.sel { background: #2b78d4; color: #fff; padding: 0 2px; }
.hscroll { height: 6px; width: 87px; display: flex; align-items: center; background: #f2f2f2; padding: 0 2px; }
.hscroll i { flex: 1; height: 6px; background: #cfcfcf; margin: 0 3px 0 6px; }
.al, .ar { width: 0; height: 0; border: 2px solid transparent; }
.al { border-right-color: #666; } .ar { border-left-color: #666; }

.workarea { flex: 1; min-width: 0; display: flex; flex-direction: column; }
.modulebar { height: 17px; display: flex; align-items: center; font-size: 5.900px; letter-spacing: -.1px; color: #555; padding: 0 0 1px 5px; flex: none; }
.lab { flex: none; }
.l-mod { width: 23px; } .l-mdl { width: 19px; margin-left: 6px; } .l-stp { width: 14px; margin-left: 7px; }
.combo u { width: 4px; height: 6px; background: #ddd; margin-right: 2px; text-decoration: none; flex: none; border: 1px solid #bbb; }
.c-mod { width: 50px; } .c-mdl { width: 67px; } .c-stp { width: 41px; }

.canvasrow { display: flex; height: 228px; flex: none; }
.palette { width: 32px; flex: none; display: flex; flex-wrap: wrap; align-content: flex-start; gap: 1.500px 2px; padding: 1px 1px 0 3px; }
.palette .ic { width: 11.500px; height: 11.500px; }
.psep { width: 100%; height: 0; margin: 1px 0; border-top: 1px solid #cdcdcd; }
.coord { font-size: 4.200px; color: #444; line-height: 11px; letter-spacing: -.2px; white-space: nowrap; text-align: center; }
.vp { display: flex; flex-direction: column; border: 1px solid #8fb1cf; flex: none; background: #d8e4ef; }
.vp-a { width: 258px; }
.vp-b { width: 257px; margin-left: 1px; }
.vp-head { height: 11px; display: flex; align-items: center; flex: none; background: linear-gradient(#c8dbeb, #dbe7f2); font-size: 5.800px; letter-spacing: -.1px; color: #555; gap: 8px; padding-left: 3px; position: relative; }
.vp-b .vp-head { background: linear-gradient(#dde8f1, #eaf0f5); }
.vp-ic { width: 7px; height: 7px; flex: none; margin-right: -5px; }
.vp-btns { margin-left: auto; display: flex; gap: 2px; padding-right: 1px; }
.vp-btns i { width: 7px; height: 6px; background: #a8bccf; border: 1px solid #8fa3b6; display: block; }
.vp-btns i.x { background: #c26262; border-color: #a45050; }
.scene { display: block; width: 100%; flex: 1; min-height: 0; }
.edge { width: 2px; flex: none; background: #e8e8e8; margin-left: 0; }
.pointer { position: absolute; left: 143px; top: 1px; width: 12px; height: 12px; z-index: 2; }
.glow { position: absolute; left: 0; top: 0; width: 10px; height: 10px; border-radius: 50%; border: 2px solid #2f9be8; background: #123e78; box-shadow: 0 0 3px 1px #39a6ee; }
.arrow { position: absolute; left: 3px; top: 4px; width: 6px; height: 9px; }
.ktx { font: 14px "Liberation Sans", sans-serif; fill: #b9bd6c; }
.wtx { font: 13px "Liberation Sans", sans-serif; fill: #d8d8ee; }
.ltx { font: 12px "Liberation Sans", sans-serif; fill: #dfe6f0; }
.rp { font: 19px "Liberation Sans", sans-serif; fill: #8bd4ad; }
.tx { font: bold 21px "Liberation Sans", sans-serif; fill: #fff; text-anchor: middle; }

.promptrow { height: 16px; display: flex; align-items: center; padding-left: 2px; font-size: 6px; letter-spacing: -.17px; color: #333; flex: none; }
.promptrow .ic { width: 9px; height: 10px; margin-left: 2px; }
.cancel { width: 8px; height: 11px; background: #e9e1d9; border: 1px solid #c8bcb0; color: #c81e1e; font-size: 8px; font-weight: bold; text-align: center; line-height: 9px; margin: 0 4px 0 2px; flex: none; }
.prompt { flex: none; }
.logo { margin-left: auto; display: flex; align-items: center; gap: 1px; font-size: 7.500px; letter-spacing: .6px; color: #2f9fa8; white-space: nowrap; padding-right: 1px; flex: none; }
.logo-ic { width: 9px; height: 12px; flex: none; }

.msgrow { height: 33px; display: flex; flex: none; background: #f2f2f2; padding-top: 2px; }
.msgtools { width: 20px; flex: none; display: flex; flex-direction: column; align-items: center; gap: 6px; padding-top: 5px; }
.msgtools .ic { width: 10px; height: 10px; }
.prompt-ic { width: 11px; height: 8px; background: #e9c45d; border: 1px solid #b58f2b; font-size: 5px; line-height: 6px; text-align: center; color: #333; overflow: hidden; }
.log { width: 612px; height: 31px; background: #fff; border: 1px solid #d8d8d8; font-family: "Liberation Mono", "Courier New", monospace; font-size: 6.200px; line-height: 6.200px; color: #444; padding: 3px 0 0 1px; position: relative; overflow: hidden; white-space: nowrap; }
.log p { margin: 0; }
.vscroll { position: absolute; right: 0; top: 0; bottom: 0; width: 7px; background: #f2f2f2; display: flex; flex-direction: column; }
.vscroll b { height: 7px; flex: none; }
.vscroll i { flex: 1; background: #cdcdcd; margin: 3px 0; }

.taskbar { height: 18px; flex: none; background: linear-gradient(90deg, #1b1d20 70%, #2b2824); display: flex; align-items: center; position: relative; filter: blur(.3px); }
.tk { width: 10px; height: 10px; flex: none; display: block; margin-right: 13px; }
.tk.start { margin: 0 6px 0 6px; }
.search { width: 162px; height: 100%; background: #3c3e42; display: flex; align-items: center; padding-left: 4px; margin-right: 6px; color: #a6a6a6; font-size: 7.200px; flex: none; }
.ring { width: 9px; height: 9px; border: 1.500px solid #f0f0f0; border-radius: 50%; margin-right: 6px; flex: none; }
.mic { width: 6px; height: 9px; margin-left: auto; margin-right: 8px; }
.t-view { margin-right: 15px; }
.tk.on { box-shadow: 0 4.500px 0 -3.500px #79a8d8; }
.app-on { background: #43454a; width: 20px; height: 18px; margin: 0 8px 0 -5px; display: flex; align-items: center; justify-content: center; box-shadow: inset 0 -1px 0 #79a8d8; }
.app-on svg { width: 10px; height: 10px; }
.tray { margin-left: auto; display: flex; align-items: center; height: 100%; color: #ddd; font-size: 5.800px; }
.tr { width: 7px; height: 7px; flex: none; margin-right: 4px; }
.tr:nth-of-type(4) { margin-right: 3.500px; }
.lang, .clock { display: flex; flex-direction: column; align-items: center; line-height: 8px; flex: none; }
.lang { width: 14px; }
.clock { width: 36px; }
.tr.note { margin: 0 8.500px 0 3.500px; width: 9px; height: 9px; }
.desk { width: 3px; height: 7px; background: #ddd; flex: none; }
```
